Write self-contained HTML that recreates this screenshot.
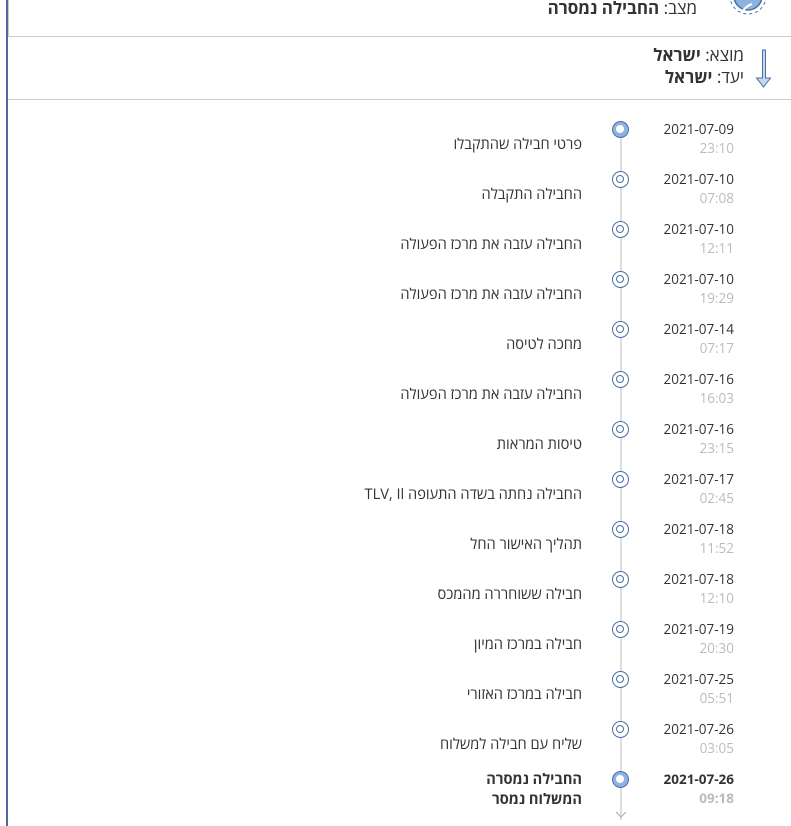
<!DOCTYPE html>
<html><head><meta charset="utf-8"><style>
body{margin:0;width:791px;height:826px;overflow:hidden;background:#fff;font-family:"Open Sans","Liberation Sans","Noto Sans CJK SC",sans-serif;color:#333;position:relative}
.a{position:absolute;white-space:nowrap}
.r{text-align:right}
.d{font-size:13.5px;color:#333;width:100px;left:634px;text-align:right}
.t{font-size:13.5px;color:#bbb;width:100px;left:634px;text-align:right}
.x{font-size:14.6px;color:#333;width:400px;left:182px;text-align:right;direction:rtl}
.c{position:absolute;left:612px;width:17px;height:17px;box-sizing:border-box;border:1.5px solid #4a6fa5;border-radius:50%;background:#fff}
.c::after{content:"";position:absolute;left:3px;top:3px;width:8px;height:8px;border:1.3px solid #4a6fa5;border-radius:50%;box-sizing:border-box}
.f{background:#8fb3e0}
.f::after{background:#fff;width:8px;height:8px;left:3px;top:3px;border:none}
</style></head><body>
<div class="a" style="left:6px;top:0;width:2px;height:826px;background:#4a6aa0"></div>
<div class="a" style="left:8px;top:0;width:1px;height:36px;background:#ccc"></div>
<div class="a" style="left:8px;top:36px;width:783px;height:1px;background:#ccc"></div>
<div class="a" style="left:8px;top:99px;width:783px;height:1px;background:#ccc"></div>
<div class="a r" style="right:94px;top:-4px;font-size:17px;direction:rtl">מצב: <b>החבילה נמסרה</b></div>
<svg class="a" style="left:722px;top:0" width="56" height="22"><circle cx="26" cy="-4" r="18" fill="none" stroke="#4a6fa5" stroke-dasharray="3,3"/><circle cx="26" cy="-4" r="14" fill="#8fb3e0" stroke="#4a6fa5" stroke-width="1.5"/><path d="M20 12 q4 -6 10 -8" stroke="#fff" stroke-width="2" fill="none"/></svg>
<div class="a r" style="right:47px;top:44px;font-size:17px;direction:rtl;line-height:22px">מוצא: <b>ישראל</b><br>יעד: <b>ישראל</b></div>
<svg class="a" style="left:755px;top:49px" width="18" height="40"><path d="M7.5 1 h3 v28 h5 l-7 9 l-7 -9 h6 z" fill="#c5d7ee" stroke="#4a6fa5"/></svg>
<div class="a" style="left:620px;top:130px;width:1.5px;height:690px;background:#ddd"></div>
<svg class="a" style="left:614px;top:810px" width="14" height="10"><path d="M2 2 l5 5 l5 -5" fill="none" stroke="#aaa"/></svg>
<div id="rows"></div>
<script>
var R=[["2021-07-09","23:10","פרטי חבילה שהתקבלו"],["2021-07-10","07:08","החבילה התקבלה"],["2021-07-10","12:11","החבילה עזבה את מרכז הפעולה"],["2021-07-10","19:29","החבילה עזבה את מרכז הפעולה"],["2021-07-14","07:17","מחכה לטיסה"],["2021-07-16","16:03","החבילה עזבה את מרכז הפעולה"],["2021-07-16","23:15","טיסות המראות"],["2021-07-17","02:45","החבילה נחתה בשדה התעופה TLV, Il"],["2021-07-18","11:52","תהליך האישור החל"],["2021-07-18","12:10","חבילה ששוחררה מהמכס"],["2021-07-19","20:30","חבילה במרכז המיון"],["2021-07-25","05:51","חבילה במרכז האזורי"],["2021-07-26","03:05","שליח עם חבילה למשלוח"],["2021-07-26","09:18","החבילה נמסרה<br>המשלוח נמסר"]];
var h="";R.forEach(function(r,i){var y=119+50*i,l=i==13,f=(i==0||l)?" f":"",b=l?"font-weight:bold;":"";
h+='<div class="c'+f+'" style="top:'+(y+2)+'px"></div><div class="a d" style="top:'+(y+1)+'px;'+b+'">'+r[0]+'</div><div class="a t" style="top:'+(y+20)+'px;'+b+'">'+r[1]+'</div><div class="a x" style="top:'+(y+(l?0:15))+'px;'+b+'line-height:20px">'+r[2]+'</div>';});
document.getElementById("rows").innerHTML=h;
</script>
</body></html>
